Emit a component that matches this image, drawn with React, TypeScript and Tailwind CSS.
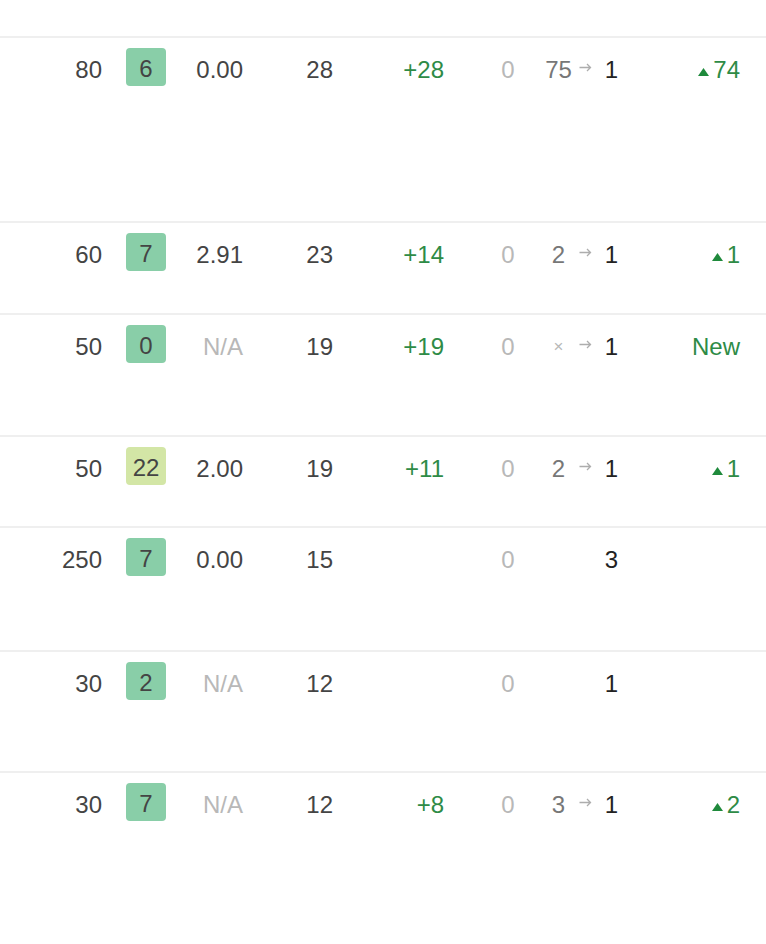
import React from "react";

type Row = {
  volume: string;
  kd: string;
  kdTone: "green" | "lime";
  cpc: string;
  traffic: string;
  trafficChange?: string;
  paid: string;
  prev?: string;
  cur: string;
  change?: string;
  height: string;
};

const rows: Row[] = [
  { volume: "80", kd: "6", kdTone: "green", cpc: "0.00", traffic: "28", trafficChange: "+28", paid: "0", prev: "75", cur: "1", change: "74", height: "h-[185px]" },
  { volume: "60", kd: "7", kdTone: "green", cpc: "2.91", traffic: "23", trafficChange: "+14", paid: "0", prev: "2", cur: "1", change: "1", height: "h-[92px]" },
  { volume: "50", kd: "0", kdTone: "green", cpc: "N/A", traffic: "19", trafficChange: "+19", paid: "0", prev: "×", cur: "1", change: "New", height: "h-[122px]" },
  { volume: "50", kd: "22", kdTone: "lime", cpc: "2.00", traffic: "19", trafficChange: "+11", paid: "0", prev: "2", cur: "1", change: "1", height: "h-[91px]" },
  { volume: "250", kd: "7", kdTone: "green", cpc: "0.00", traffic: "15", paid: "0", cur: "3", height: "h-[124px]" },
  { volume: "30", kd: "2", kdTone: "green", cpc: "N/A", traffic: "12", paid: "0", cur: "1", height: "h-[121px]" },
  { volume: "30", kd: "7", kdTone: "green", cpc: "N/A", traffic: "12", trafficChange: "+8", paid: "0", prev: "3", cur: "1", change: "2", height: "h-[200px]" },
];

function Arrow() {
  return (
    <svg width="13" height="9" viewBox="0 0 13 9">
      <path d="M0.5 4.5 H11.5 M8 1 L11.5 4.5 L8 8" stroke="#adadad" strokeWidth="1.3" fill="none" />
    </svg>
  );
}

function UpTriangle() {
  return (
    <svg width="11" height="8" viewBox="0 0 11 8" className="inline-block align-[2px] mr-[4px]">
      <path d="M5.5 0 L11 8 L0 8 Z" fill="#1f8a3c" />
    </svg>
  );
}

export default function App() {
  return (
    <div className="w-[766px] h-[944px] overflow-hidden bg-white font-['Liberation_Sans',Arial,sans-serif] text-[24px] text-[#444]">
      <div className="h-[36px]" />
      {rows.map((r, i) => (
        <div key={i} className={`${r.height} border-t-2 border-[#efefef] pt-[10px]`}>
          <div className="flex items-center h-[38px]">
            <div className="mt-[5px] w-[102px] text-right">{r.volume}</div>
            <div
              className={`ml-[24px] w-[40px] h-[38px] pt-[3px] rounded-[4px] flex items-center justify-center ${
                r.kdTone === "lime" ? "bg-[#d3e6a6]" : "bg-[#89cea8]"
              }`}
            >
              {r.kd}
            </div>
            <div className={`mt-[5px] w-[77px] text-right ${r.cpc === "N/A" ? "text-[#b8b8b8]" : ""}`}>{r.cpc}</div>
            <div className="mt-[5px] w-[90px] text-right">{r.traffic}</div>
            <div className="mt-[5px] w-[111px] text-right text-[#2e8b46]">{r.trafficChange ?? ""}</div>
            <div className="mt-[5px] ml-[49px] w-[30px] text-center text-[#b8b8b8]">{r.paid}</div>
            <div className="mt-[5px] ml-[15px] w-[41px] flex justify-center">
              {r.prev === "×" ? (
                <span className="text-[17px] text-[#b8b8b8]">×</span>
              ) : (
                <span className="text-[#777]">{r.prev ?? ""}</span>
              )}
            </div>
            <div className="w-[13px] flex items-center">{r.prev ? <Arrow /> : null}</div>
            <div className="mt-[5px] w-[26px] text-right text-[#222]">{r.cur}</div>
            <div className="mt-[5px] w-[122px] text-right text-[#2e8b46]">
              {r.change && r.change !== "New" ? <UpTriangle /> : null}
              {r.change ?? ""}
            </div>
          </div>
        </div>
      ))}
    </div>
  );
}
